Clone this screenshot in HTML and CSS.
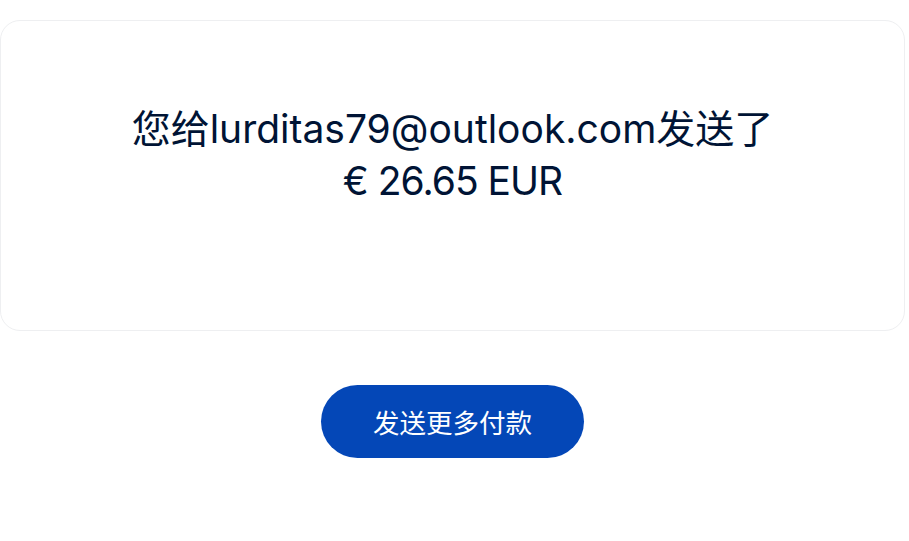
FILE: index.html
```html
<!DOCTYPE html>
<html lang="zh-CN">
<head>
  <meta charset="UTF-8">
  <meta name="viewport" content="width=device-width, initial-scale=1.0">
  <title>付款已发送</title>
  <link rel="stylesheet" href="styles.css">
</head>
<body>
  <div class="page">
    <!-- 付款结果卡片 -->
    <div class="card">
      <p class="message">
        <span class="recipient">您给lurditas79@outlook.com发送了</span>
        <span class="amount">€ 26.65 EUR</span>
      </p>
    </div>

    <div class="actions">
      <button class="btn-primary">发送更多付款</button>
    </div>
  </div>
</body>
</html>
```

FILE: styles.css
```css
body {
  margin: 0;
  background-color: #fff;
  font-family: Inter, "Noto Sans CJK SC", sans-serif;
  color: #001435;
}
.page {
  width: 905px;
  padding-top: 20px;
}
.card {
  box-sizing: border-box;
  height: 311px;
  border: 1px solid #eeeff1;
  border-radius: 20px;
  padding-top: 82px;
  text-align: center;
}
.message {
  margin: 0;
  font-size: 39px;
  line-height: 52px;
}
.recipient,
.amount {
  display: block;
}
.amount {
  letter-spacing: -1px;
}
.actions {
  display: flex;
  justify-content: center;
  margin-top: 54px;
}
.btn-primary {
  width: 263px;
  height: 73px;
  border: none;
  border-radius: 37px;
  background-color: #0447b7;
  color: #fff;
  font-family: Inter, "Noto Sans CJK SC", sans-serif;
  font-size: 26.5px;
  cursor: pointer;
}
```
